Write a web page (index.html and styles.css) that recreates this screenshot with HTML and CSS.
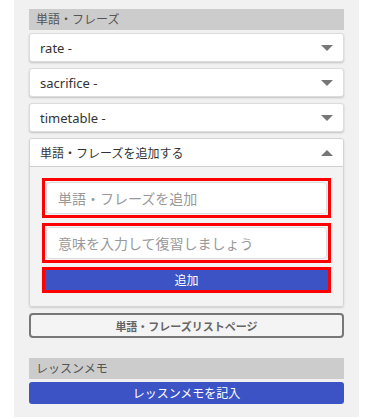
FILE: index.html
```html
<!DOCTYPE html>
<html lang="ja">
<head>
  <meta charset="UTF-8" />
  <title>単語・フレーズ</title>
  <link rel="stylesheet" href="styles.css">
</head>
<body>
  <div class="panel">
    <div class="section-title">単語・フレーズ</div>

    <div class="word-item">
      <span>rate -</span>
      <span class="arrow down"></span>
    </div>
    <div class="word-item">
      <span>sacrifice -</span>
      <span class="arrow down"></span>
    </div>
    <div class="word-item">
      <span>timetable -</span>
      <span class="arrow down"></span>
    </div>

    <!-- 追加フォーム -->
    <div class="add-box">
      <div class="add-head">
        <span>単語・フレーズを追加する</span>
        <span class="arrow up"></span>
      </div>
      <div class="add-body">
        <div class="err">
          <input type="text" placeholder="単語・フレーズを追加" />
        </div>
        <div class="err">
          <input type="text" placeholder="意味を入力して復習しましょう" />
        </div>
        <div class="err err-btn">
          <button class="btn-blue small">追加</button>
        </div>
      </div>
    </div>

    <button class="btn-outline">単語・フレーズリストページ</button>

    <div class="section-title memo-title">レッスンメモ</div>
    <button class="btn-blue">レッスンメモを記入</button>
  </div>
</body>
</html>
```

FILE: styles.css
```css
* { box-sizing: border-box; }
body {
  margin: 0;
  background: #fff;
  color: #444;
  font-family: 'Noto Sans', 'Noto Sans CJK JP', sans-serif;
}
.panel {
  margin-left: 14px;
  width: 345px;
  height: 417px;
  background: #f1f1f1;
  padding: 9px 15px 0 15px;
}
.section-title {
  background: #cccccc;
  color: #555;
  font-size: 12px;
  height: 21px;
  line-height: 21px;
  padding-left: 7px;
  margin-bottom: 3px;
}
.word-item {
  display: flex;
  justify-content: space-between;
  align-items: center;
  height: 29px;
  background: #fff;
  border: 1px solid #dcdcdc;
  border-radius: 3px;
  box-shadow: 0 1px 2px rgba(0,0,0,0.2);
  padding: 0 10px 0 10px;
  margin-bottom: 6px;
  font-size: 13px;
  color: #333;
}
.arrow {
  width: 0;
  height: 0;
  border-left: 6px solid transparent;
  border-right: 6px solid transparent;
}
.arrow.down { border-top: 6px solid #777; }
.arrow.up { border-bottom: 6px solid #777; }

.add-box {
  border: 1px solid #d4d4d4;
  border-radius: 3px;
  box-shadow: 0 1px 2px rgba(0,0,0,0.15);
  overflow: hidden;
}
.add-head {
  display: flex;
  justify-content: space-between;
  align-items: center;
  height: 28px;
  background: #fff;
  border-bottom: 1px solid #cfcfcf;
  padding: 0 10px;
  font-size: 12px;
  color: #333;
}
.add-body {
  background: #f3f3f3;
  padding: 11px 12px 13px 12px;
}
.err {
  border: 3px solid #ff0000;
  padding: 1px;
  margin-bottom: 5px;
}
.err input {
  display: block;
  width: 100%;
  height: 32px;
  border: 1px solid #ddd;
  border-radius: 4px;
  background: #fff;
  padding: 0 11px;
  font-size: 14px;
  font-family: inherit;
  color: #333;
}
.err input::placeholder { color: #999; }
.err-btn {
  padding: 0;
  margin-bottom: 0;
  margin-top: -1px;
}
.btn-blue {
  display: block;
  width: 100%;
  height: 22px;
  border: none;
  border-radius: 3px;
  background: #3b53c4;
  color: #fff;
  font-size: 12px;
  font-family: inherit;
  cursor: pointer;
}
.btn-blue.small {
  height: 20px;
  border-radius: 0;
}
.btn-outline {
  display: block;
  width: 100%;
  height: 25px;
  margin-top: 6px;
  border: 2px solid #777;
  border-radius: 4px;
  background: #f4f4f4;
  color: #666;
  font-size: 11px;
  font-weight: bold;
  font-family: inherit;
  cursor: pointer;
}
.memo-title {
  margin-top: 20px;
}
```
